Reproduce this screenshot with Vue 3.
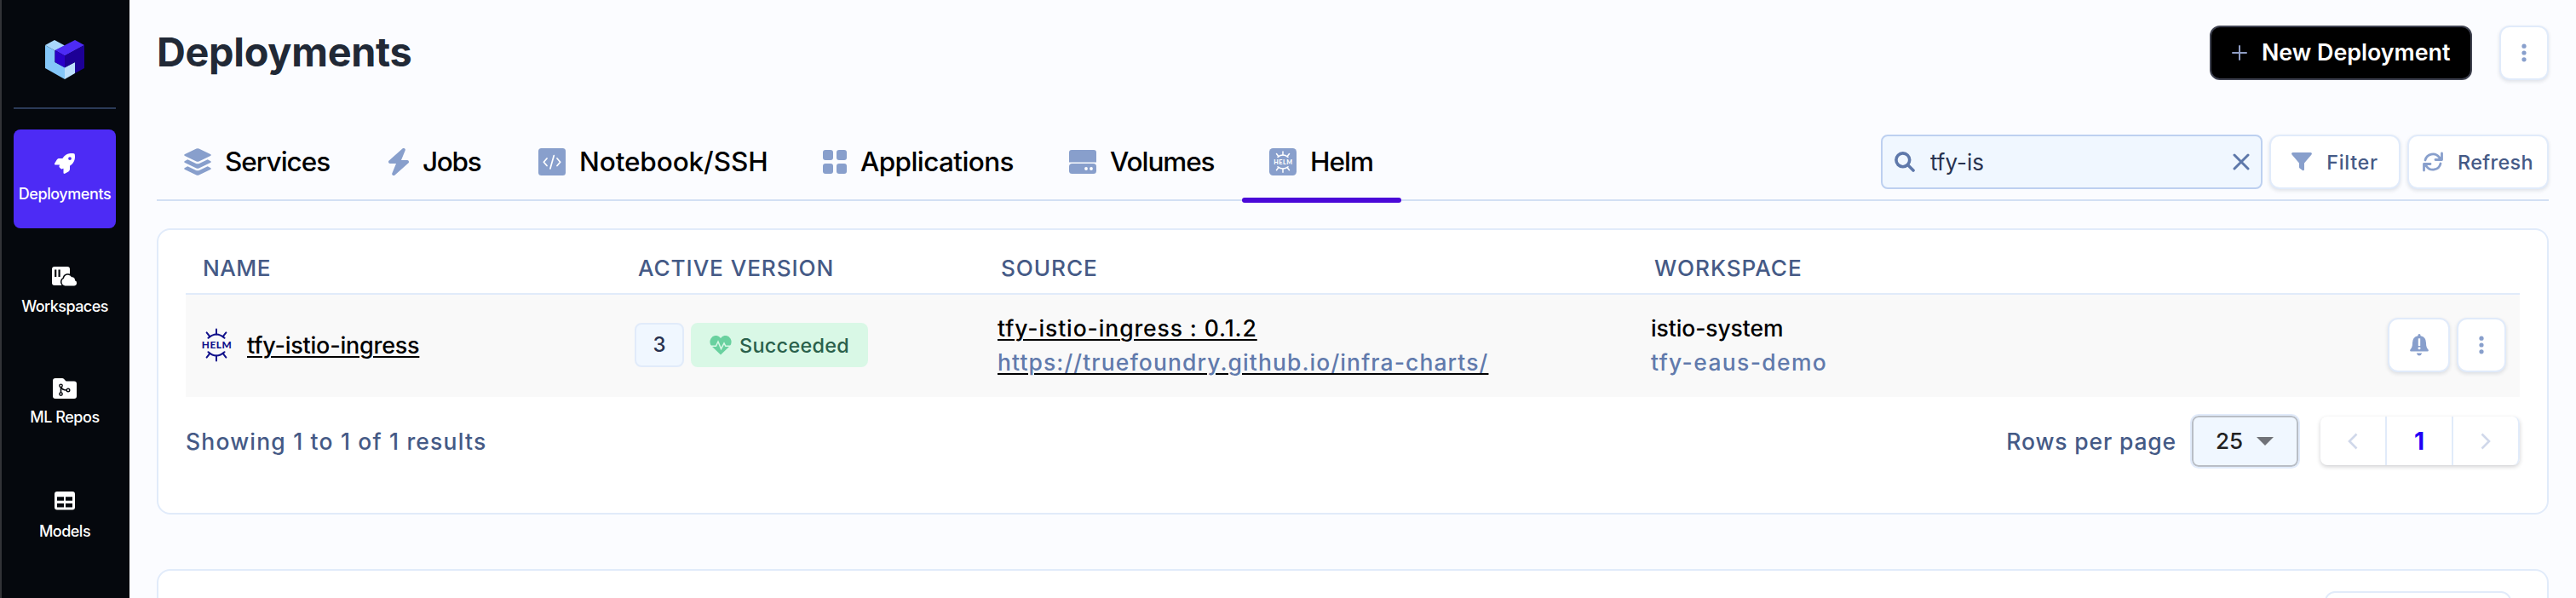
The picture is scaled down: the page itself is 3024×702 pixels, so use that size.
<script setup>
const nav = [
  { id: 'deployments', label: 'Deployments', active: true },
  { id: 'workspaces', label: 'Workspaces' },
  { id: 'repos', label: 'ML Repos' },
  { id: 'models', label: 'Models' },
]
const tabs = [
  { id: 'services', label: 'Services' },
  { id: 'jobs', label: 'Jobs' },
  { id: 'notebook', label: 'Notebook/SSH' },
  { id: 'applications', label: 'Applications' },
  { id: 'volumes', label: 'Volumes' },
  { id: 'helm', label: 'Helm', active: true },
]
const rays = [-38, 0, 38, 142, 180, 218]
</script>

<template>
  <div class="app">
    <aside class="sidebar">
      <svg class="logo" width="46" height="46" viewBox="0 0 46 46">
        <path d="M0 6 11 0 23 6.500 11.500 12.500Z" fill="#a9d7fb" />
        <path d="M0 6 11.500 12.500V26L23 32V46L0 33Z" fill="#84c7f9" />
        <path d="M23 32 35 26V39L23 46Z" fill="#bde0fd" />
        <path d="M11.500 12 35 0 46 6 23 18.500Z" fill="#4d2bf5" />
        <path d="M11.500 12 23 18.500V32.500L11.500 26Z" fill="#2a00c9" />
        <path d="M23 18.500 46 6V33L35 39V26L23 32.500Z" fill="#1d0096" />
      </svg>
      <div class="rule"></div>
      <nav class="nav">
        <a v-for="n in nav" :key="n.id" class="nav-item" :class="[n.id, { active: n.active }]">
          <span class="nav-icon">
            <svg v-if="n.id === 'deployments'" width="24" height="24" viewBox="0 0 512 512" fill="#fff">
              <path fill-rule="evenodd" d="M156.600 384.900 125.700 354c-8.500-8.500-11.500-20.800-7.700-32.200 3-8.900 7-20.500 11.800-33.800H24c-8.600 0-16.600-4.600-20.900-12.100s-4.200-16.700.2-24.100l52.500-88.500c13-21.900 36.500-35.300 61.900-35.300h82.300c2.400-4 4.800-7.700 7.200-11.300C289.100-4.100 411.100-8.100 483.900 5.300c11.600 2.100 20.600 11.200 22.800 22.800 13.400 72.900 9.300 194.800-111.400 276.700-3.500 2.400-7.300 4.800-11.300 7.200v82.300c0 25.400-13.400 49-35.300 61.900l-88.500 52.500c-7.400 4.400-16.600 4.500-24.100.2S224 496.700 224 488V380.800c-14.100 4.900-26.400 8.900-35.700 11.900-11.200 3.600-23.400.5-31.800-7.800zM384 168a40 40 0 1 0 0-80 40 40 0 0 0 0 80z" />
            </svg>
            <svg v-else-if="n.id === 'workspaces'" width="30" height="23" viewBox="0 0 30 23">
              <rect width="21" height="22" rx="3" fill="#fff" />
              <path d="M4.200 3.500v8.500M8.600 3.500v8.500" stroke="#05080d" stroke-width="2.200" />
              <path d="M15.500 22.500a4.500 4.500 0 0 1-1.500-8.500 4.800 4.800 0 0 1 9-1.800 3.600 3.600 0 0 1 4 4.100 3.200 3.200 0 0 1-.8 6.200Z" fill="#fff" stroke="#05080d" stroke-width="3" paint-order="stroke" />
            </svg>
            <svg v-else-if="n.id === 'repos'" width="28" height="24" viewBox="0 0 28 24">
              <path d="M3 0h8q1.300 0 2.200 1l1.800 2q.6.600 1.500.600H25q3 0 3 3V21q0 3-3 3H3q-3 0-3-3V3q0-3 3-3Z" fill="#fff" />
              <path d="M9.500 10v8M9.500 10q1.500 4 6.500 4" fill="none" stroke="#05080d" stroke-width="1.600" />
              <g fill="#fff" stroke="#05080d" stroke-width="1.400"><circle cx="9.500" cy="8.800" r="1.700" /><circle cx="9.500" cy="18.600" r="1.700" /><circle cx="18" cy="14" r="1.800" /></g>
            </svg>
            <svg v-else width="24" height="22" viewBox="0 0 24 22">
              <path fill-rule="evenodd" d="M3 0h18q3 0 3 3v15.500q0 3-3 3H3q-3 0-3-3V3q0-3 3-3ZM3 6.300v4.500h8V6.300ZM13 6.300v4.500h8V6.300ZM3 14v4.500h8V14ZM13 14v4.500h8V14Z" fill="#fff" />
            </svg>
          </span>
          <span class="nav-label">{{ n.label }}</span>
        </a>
      </nav>
    </aside>

    <main class="main">
      <header class="head">
        <h1>Deployments</h1>
        <div class="head-actions">
          <button class="primary">
            <svg width="18" height="18" viewBox="0 0 18 18"><path d="M9 1v16M1 9h16" stroke="#8f9dc4" stroke-width="2" stroke-linecap="round" /></svg>
            <span>New Deployment</span>
          </button>
          <button class="btn more">
            <svg width="6" height="22" viewBox="0 0 6 22" fill="#889fcc"><circle cx="3" cy="3.200" r="2.600" /><circle cx="3" cy="11" r="2.600" /><circle cx="3" cy="18.800" r="2.600" /></svg>
          </button>
        </div>
      </header>

      <div class="toolbar">
        <div class="tabs">
          <a v-for="t in tabs" :key="t.id" class="tab" :class="[t.id, { active: t.active }]">
            <svg v-if="t.id === 'services'" width="32" height="32" viewBox="0 0 32 32" fill="#889fcc">
              <path d="M1 7 14.500.500q1.500-.7 3 0L31 7q1.600 1 0 2.100L17.500 15.400q-1.500.7-3 0L1 9.100Q-.6 8 1 7Z" />
              <path d="M1 14.900 4.300 13.300 13.600 17.700q2.400 1 4.800 0l9.300-4.400L31 14.900q1.600 1 0 2.100l-13.500 6.400q-1.500.7-3 0L1 17q-1.600-1 0-2.100Z" />
              <path d="M1 22.900 4.300 21.300 13.600 25.700q2.400 1 4.800 0l9.300-4.400L31 22.900q1.600 1 0 2.100l-13.500 6.400q-1.500.7-3 0L1 25q-1.600-1 0-2.100Z" />
            </svg>
            <svg v-else-if="t.id === 'jobs'" width="24" height="32" viewBox="0 0 24 32" fill="#889fcc">
              <path d="M19.600 2.800a2 2 0 0 0-3.200-2.300L.700 14.500A2 2 0 0 0 2 18h7L4.400 29.200a2 2 0 0 0 3.200 2.300l15.700-14A2 2 0 0 0 22 14h-7Z" />
            </svg>
            <svg v-else-if="t.id === 'notebook'" width="32" height="32" viewBox="0 0 32 32">
              <rect width="32" height="32" rx="3.500" fill="#889fcc" />
              <path d="M10 12 6.300 16.200 10 20.500M22 12l3.700 4.200L22 20.500M18.300 8.500l-4.400 15.500" fill="none" stroke="#fff" stroke-width="1.700" stroke-linecap="round" stroke-linejoin="round" />
            </svg>
            <svg v-else-if="t.id === 'applications'" width="28" height="28" viewBox="0 0 28 28" fill="#889fcc">
              <rect width="12" height="12" rx="3" /><rect x="16" width="12" height="12" rx="3" /><rect y="16" width="12" height="12" rx="3" /><rect x="16" y="16" width="12" height="12" rx="3" />
            </svg>
            <svg v-else-if="t.id === 'volumes'" width="32" height="28" viewBox="0 0 32 28">
              <path d="M3 0h26q3 0 3 3v11.500H0V3q0-3 3-3Z" fill="#889fcc" />
              <rect y="16" width="32" height="12" rx="3.500" fill="#889fcc" />
              <circle cx="20" cy="22" r="1.900" fill="#fff" /><circle cx="26" cy="22" r="1.900" fill="#fff" />
            </svg>
            <svg v-else width="32" height="32" viewBox="0 0 32 32">
              <rect width="32" height="32" rx="4.500" fill="#889fcc" />
              <g stroke="#fff" stroke-width="1.500" fill="none" stroke-linecap="round">
                <path d="M10 10.400q6-4.600 12 0M10 21.800q6 4.600 12 0" />
                <path v-for="r in rays" :key="r" d="M16 7.700V3.900" :transform="`rotate(${r} 16 16.100)`" />
              </g>
              <text x="16.200" y="18.700" text-anchor="middle" class="helm-word" fill="#fff" font-size="7.200" textLength="22">HELM</text>
            </svg>
            <span>{{ t.label }}</span>
          </a>
        </div>
        <div class="tools">
          <div class="search">
            <svg width="24" height="24" viewBox="0 0 24 24" fill="none" stroke="#5e78aa" stroke-linecap="round"><circle cx="9.800" cy="9.800" r="7.900" stroke-width="3.600" /><path d="M16 16l6 6" stroke-width="3.600" /></svg>
            <span class="query">tfy-is</span>
            <svg width="20" height="20" viewBox="0 0 20 20"><path d="M2 2l16 16M18 2 2 18" stroke="#5e78aa" stroke-width="3" stroke-linecap="round" /></svg>
          </div>
          <button class="btn filter">
            <svg width="24" height="22" viewBox="0 0 24 22" fill="#889fcc"><path d="M1.500 0h21q2.200.4 1 2.400L15 12.600V20q-.4 1.900-2 1L9.600 18.600Q9 18 9 17.300v-4.700L.500 2.400Q-.700.400 1.500 0Z" /></svg>
            <span>Filter</span>
          </button>
          <button class="btn refresh">
            <svg width="24" height="24" viewBox="0 0 24 24" fill="none" stroke="#889fcc" stroke-width="2.800" stroke-linecap="round" stroke-linejoin="round"><path d="M3 10A9.200 9.200 0 0 1 19.500 6.800L21.500 9M22.500 2v7.500H15M21 14A9.200 9.200 0 0 1 4.500 17.200L2.500 15M1.500 22v-7.500H9" /></svg>
            <span>Refresh</span>
          </button>
        </div>
      </div>

      <section class="card">
        <div class="grid thead">
          <span class="c-name">NAME</span><span class="c-ver">ACTIVE VERSION</span><span class="c-src">SOURCE</span><span class="c-ws">WORKSPACE</span><span></span>
        </div>
        <div class="grid row">
          <div class="name">
            <svg width="36" height="40" viewBox="0 0 36 40">
              <g stroke="#10108a" stroke-width="2" fill="none" stroke-linecap="round">
                <path d="M8.500 11.800q9.500-8.600 19 0M8.500 28.200q9.500 8.600 19 0" />
                <path v-for="r in rays" :key="r" d="M18 7.600V1.500" :transform="`rotate(${r} 18 20)`" />
              </g>
              <text x="18.200" y="24.200" text-anchor="middle" class="helm-word" fill="#10108a" font-size="11.800" textLength="35">HELM</text>
            </svg>
            <a class="link">tfy-istio-ingress</a>
          </div>
          <div class="version">
            <span class="chip">3</span>
            <span class="status">
              <svg width="26" height="23" viewBox="0 0 26 23"><path d="M13 22.500 2 12Q-1 7.500 1.500 3.400 4-.300 8-.100 11 .3 13 3 15 .3 18-.100q4-.2 6.500 3.500Q27 7.500 24 12Z" fill="#69d19f" /><path d="M1 12.300h6.500L10 7l3.500 8.500L17 8.800l1.800 3.500H25" fill="none" stroke="#d9f8e6" stroke-width="1.500" /></svg>
              <span>Succeeded</span>
            </span>
          </div>
          <div class="lines source">
            <a class="link src-name">tfy-istio-ingress : 0.1.2</a>
            <a class="link src-url">https://truefoundry.github.io/infra-charts/</a>
          </div>
          <div class="lines ws">
            <span class="ws-name">istio-system</span>
            <span class="ws-sub">tfy-eaus-demo</span>
          </div>
          <div class="actions">
            <button class="btn bell">
              <svg width="22" height="26" viewBox="0 0 22 26"><path d="M11 0q1.600 0 1.600 2.200Q19 3.600 19 10.500c0 4 .8 6 2.600 8.100q.8 1.900-1 1.900H1.400q-1.800 0-1-1.900C2.200 16.500 3 14.500 3 10.500q0-6.900 6.400-8.300Q9.400 0 11 0ZM7.800 22.600h6.400Q13.500 25.400 11 25.400T7.800 22.600Z" fill="#889fcc" /><path d="M11 6.500v6.300" stroke="#fff" stroke-width="2.400" stroke-linecap="square" /><circle cx="11" cy="16.800" r="1.500" fill="#fff" /></svg>
            </button>
            <button class="btn dots">
              <svg width="6" height="22" viewBox="0 0 6 22" fill="#889fcc"><circle cx="3" cy="3.200" r="2.600" /><circle cx="3" cy="11" r="2.600" /><circle cx="3" cy="18.800" r="2.600" /></svg>
            </button>
          </div>
        </div>
        <footer class="foot">
          <span class="showing">Showing 1 to 1 of 1 results</span>
          <span class="rpp">Rows per page</span>
          <div class="select"><span>25</span><svg width="20" height="10" viewBox="0 0 20 10"><path d="M0 0h20L10 10Z" fill="#707278" /></svg></div>
          <div class="pager">
            <span><svg width="12" height="20" viewBox="0 0 12 20"><path d="M10.500 1.500 2 10l8.500 8.500" fill="none" stroke="#d0d8ea" stroke-width="2.600" /></svg></span>
            <span class="current">1</span>
            <span><svg width="12" height="20" viewBox="0 0 12 20"><path d="M1.500 1.500 10 10l-8.500 8.500" fill="none" stroke="#d0d8ea" stroke-width="2.600" /></svg></span>
          </div>
        </footer>
      </section>

      <section class="card next"><div class="stub"></div></section>
    </main>
  </div>
</template>

<style>
body { margin: 0; background: #fbfcff; overflow: hidden; }
</style>

<style scoped>
* { box-sizing: border-box; }
.app { display: flex; width: 3024px; height: 702px; overflow: hidden; background: #fbfcff; font-family: Inter, "Liberation Sans", sans-serif; white-space: nowrap; }
svg { display: block; flex: none; }
button { font-family: inherit; padding: 0; margin: 0; cursor: pointer; }

.sidebar { width: 152px; flex: none; background: #05080d; border-left: 2px solid #323337; padding: 47px 16px 0 14px; color: #fff; }
.logo { margin: 0 auto; }
.rule { height: 2px; margin-top: 33px; background: #2b3a57; }
.nav { display: flex; flex-direction: column; margin-top: 24px; }
.nav-item { display: flex; flex-direction: column; align-items: center; height: 116px; padding-top: 28px; border-radius: 8px; margin-bottom: 16px; }
.nav-item.active { background: #4d2bf5; }
.nav-icon { height: 24px; display: flex; align-items: flex-start; }
.nav-label { font-size: 18px; font-weight: 500; line-height: 22px; margin-top: 12.500px; }
.nav-item.deployments { letter-spacing: -0.42px; }
.nav-item.workspaces { letter-spacing: -0.55px; padding-top: 29px; margin-bottom: 15px; }
.nav-item.workspaces .nav-label { margin-top: 12px; }
.nav-item.repos { letter-spacing: -0.46px; padding-top: 29px; }
.nav-item.repos .nav-label { margin-top: 11px; }
.nav-item.models { letter-spacing: -0.5px; padding-top: 29px; margin-top: 1px; }
.nav-item.models .nav-label { margin-top: 11.500px; }

.main { flex: 1; padding: 0 32px; display: flex; flex-direction: column; }
.head { flex: none; height: 64px; margin-top: 30px; display: flex; justify-content: space-between; }
h1 { margin: 0; font-size: 46.800px; line-height: 62px; letter-spacing: -0.28px; font-weight: 700; color: #212936; }
.head-actions { display: flex; gap: 32px; }
.primary { width: 308px; height: 64px; border-radius: 12px; border: 2px solid #3f4250; background: #000; color: #fff; display: flex; align-items: center; padding-left: 24px; gap: 17px; font-size: 26.800px; font-weight: 600; }
.primary span { margin-top: -3px; }
.btn { display: flex; align-items: center; justify-content: center; height: 64px; background: #fff; border: 2px solid #e1ebfa; border-radius: 12px; box-shadow: 0 2px 4px rgba(20, 30, 60, .12); color: #455a86; font-size: 23.400px; font-weight: 500; }
.more, .dots { width: 58px; }

.toolbar { flex: none; display: flex; justify-content: space-between; height: 78px; margin-top: 64px; border-bottom: 2px solid #d2e0f4; }
.tabs { display: flex; }
.tab { position: relative; display: flex; align-items: center; padding-left: 32px; height: 64px; font-size: 31.500px; font-weight: 500; color: #000; gap: 16px; }
.tab span { line-height: 40px; }
.services { width: 240px; letter-spacing: -1px; }
.jobs { width: 176px; letter-spacing: -1.300px; }
.notebook { width: 334px; letter-spacing: -0.1px; }
.applications { width: 289px; letter-spacing: -0.6px; }
.volumes { width: 235px; letter-spacing: -1.070px; }
.helm { width: 187px; letter-spacing: -1px; }
.tab.active::after { content: ""; position: absolute; left: 0; right: 0; top: 74px; height: 6px; border-radius: 3px; background: #4a08d8; }
.helm-word { font-family: Lato, sans-serif; font-weight: 900; letter-spacing: 0; }
.tools { display: flex; gap: 8px; }
.search { width: 448px; height: 64px; border: 2px solid #bdd0f0; border-radius: 8px; background: #f0f7ff; display: flex; align-items: center; padding: 0 13px 0 14px; }
.query { flex: 1; margin-left: 18px; font-size: 26px; color: #28324f; }
.filter { width: 154px; gap: 17px; letter-spacing: .7px; }
.refresh { width: 166px; gap: 17px; letter-spacing: .37px; }

.card { margin-top: 32px; height: 336px; flex: none; background: #fff; border: 2px solid #e1ebfa; border-radius: 16px; padding: 0 32px; }
.card.next { margin-top: 64px; padding: 24px 42px 0; }
.stub { width: 219px; height: 64px; margin-left: auto; border: 2px solid #e1ebfa; border-radius: 12px; }
.grid { display: grid; grid-template-columns: 519px 426px 767px 1fr auto; }
.thead { height: 76px; padding-top: 27px; border-bottom: 2px solid #e1ebfa; font-size: 26.200px; line-height: 36px; font-weight: 450; color: #455a86; }
.c-name { padding-left: 20px; letter-spacing: .5px; }
.c-ver { padding-left: 12px; letter-spacing: .9px; }
.c-src { padding-left: 12px; letter-spacing: .9px; }
.c-ws { padding-left: 12px; letter-spacing: .95px; }
.row { height: 120px; align-items: center; background: #f9f9f9; padding-bottom: 2px; }
.name { display: flex; align-items: center; padding-left: 18px; gap: 18px; }
.name .link { font-size: 27px; font-weight: 500; letter-spacing: -.24px; }
.link { color: #000; text-decoration: underline; text-decoration-color: #000; text-decoration-thickness: 2px; text-underline-offset: 3px; }
.version { display: flex; gap: 8px; padding-left: 8px; }
.chip { width: 58px; height: 52px; border: 2px solid #e1ebfa; border-radius: 8px; background: #f0f7ff; color: #28324f; font-size: 24px; font-weight: 500; line-height: 47px; text-align: center; }
.status { width: 208px; height: 52px; border-radius: 8px; background: #d9f8e6; color: #2a604b; display: flex; align-items: center; padding-left: 22px; gap: 9px; font-size: 23.400px; font-weight: 500; letter-spacing: .3px; }
.lines { display: flex; flex-direction: column; align-items: flex-start; font-size: 26.500px; line-height: 40px; padding-left: 8px; }
.src-name { font-weight: 500; letter-spacing: .9px; }
.src-url.link { font-weight: 450; color: #617aac; letter-spacing: 1.090px; }
.ws-name { font-weight: 500; letter-spacing: -.1px; color: #000; }
.ws-sub { font-weight: 450; color: #617aac; letter-spacing: 1.350px; }
.actions { display: flex; gap: 8px; padding-right: 16px; }
.bell { width: 73px; }
.foot { display: flex; align-items: center; height: 103px; font-size: 26.500px; font-weight: 450; color: #455a86; }
.showing { flex: 1; letter-spacing: 1.180px; }
.rpp { letter-spacing: .85px; }
.select { width: 129px; height: 64px; margin-left: 16px; border: 2px solid #e1ebfa; box-shadow: inset 0 0 0 2px #b9bec6; border-radius: 10px; background: #f0f7ff; color: #222; display: flex; align-items: center; padding-left: 28px; gap: 16px; font-size: 26px; font-weight: 500; }
.pager { display: flex; width: 234px; height: 57px; margin-left: 24px; border-radius: 8px; box-shadow: 0 2px 5px rgba(20, 20, 30, .2); }
.pager span { flex: 1; display: flex; align-items: center; justify-content: center; border-right: 2px solid #e1ebfa; }
.pager span:last-child { border-radius: 0 8px 8px 0; }
.pager .current { color: #2200f5; font-weight: 700; font-size: 28px; }
</style>
